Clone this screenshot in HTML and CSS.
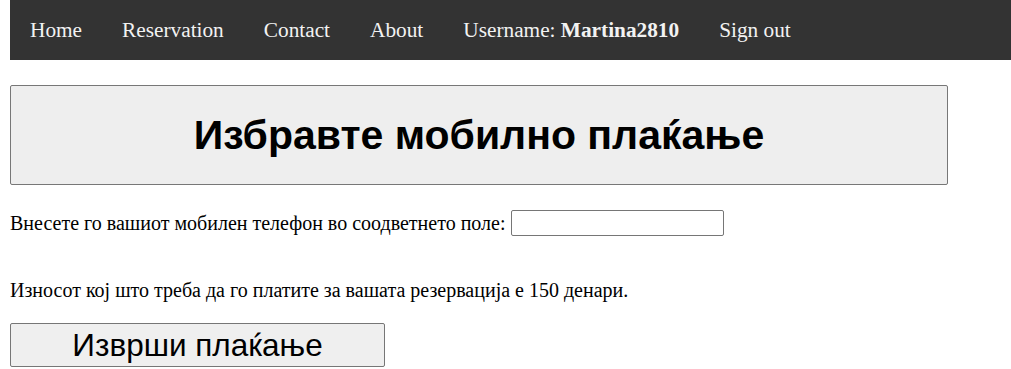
FILE: index.html
```html
<!DOCTYPE html>
<html lang="mk">
<head>
    <meta charset="UTF-8">
    <meta name="viewport" content="width=device-width, initial-scale=1.0">
    <title>Мобилно плаќање</title>
    <link rel="stylesheet" href="styles.css">
</head>
<body>
    <nav class="topnav">
        <a href="#">Home</a>
        <a href="#">Reservation</a>
        <a href="#">Contact</a>
        <a href="#">About</a>
        <span class="user">Username: <b>Martina2810</b></span>
        <a href="#">Sign out</a>
    </nav>
    <h1 class="title">Избравте мобилно плаќање</h1>
    <form class="payment">
        <p class="phone-row">
            <label for="phone">Внесете го вашиот мобилен телефон во соодветнето поле:</label>
            <input type="text" id="phone" name="phone">
        </p>
        <p class="amount">Износот кој што треба да го платите за вашата резервација е 150 денари.</p>
        <button type="submit" class="pay-btn">Изврши плаќање</button>
    </form>
</body>
</html>
```

FILE: styles.css
```css
body {
    font-family: 'Liberation Serif', 'Times New Roman', serif;
    font-size: 20px;
    margin: 0 0 0 10px;
    color: #000;
}
.topnav {
    background-color: #333;
    display: flex;
    height: 60px;
    align-items: center;
}
.topnav a,
.topnav .user {
    color: #f2f2f2;
    text-decoration: none;
    font-size: 21.3px;
    padding: 0 20px;
    line-height: 60px;
}
.title {
    font-family: 'Liberation Sans', Arial, sans-serif;
    font-size: 41px;
    font-weight: bold;
    text-align: center;
    width: 936px;
    margin: 25px 0 0;
    padding: 26px 0 25px;
    background-color: #eee;
    border: 1px solid #777;
    border-radius: 2px;
}
.phone-row {
    display: flex;
    align-items: center;
    gap: 5px;
    margin: 25px 0 0;
}
.phone-row input {
    width: 207px;
    height: 22px;
    padding: 1px 2px;
    border: 1px solid #767676;
    border-radius: 2px;
    font-size: 16px;
}
.amount {
    margin: 43px 0 0;
}
.pay-btn {
    font-family: 'Liberation Sans', Arial, sans-serif;
    font-size: 31.5px;
    width: 375px;
    height: 44px;
    margin-top: 21px;
    background-color: #efefef;
    border: 1px solid #767676;
    border-radius: 2px;
    padding: 0;
    color: #000;
}
```
